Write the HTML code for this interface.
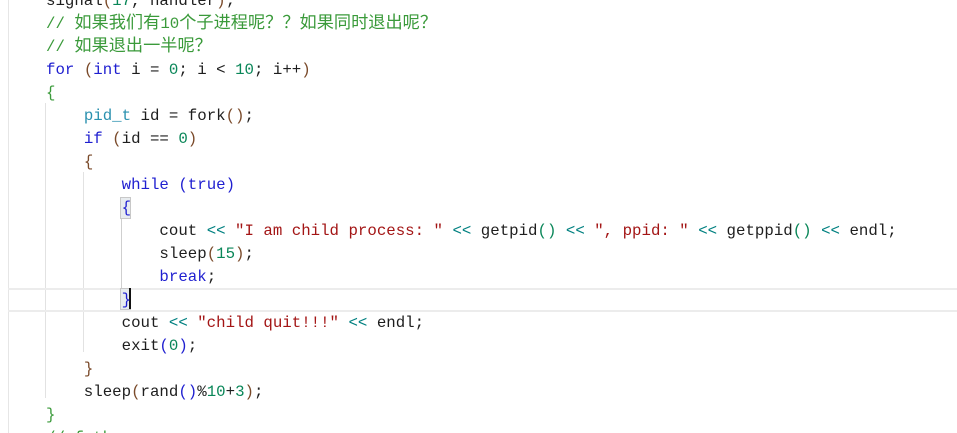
<!DOCTYPE html>
<html><head><meta charset="utf-8"><style>
html,body{margin:0;padding:0;background:#fff;width:957px;height:433px;overflow:hidden;position:relative}
.code{position:absolute;left:46px;top:-10px;font-family:"Liberation Mono","Noto Sans CJK SC",monospace;font-size:15.75px;line-height:23px;color:#1e1e1e;white-space:pre}
.k{color:#1f1fd0}.t{color:#2b91af}.n{color:#098658}.s{color:#a31515}.o{color:#008080}.c{color:#3a9a3a}.p{color:#7a4a2a}
.z{font-size:17.2px;line-height:0}
.g{position:absolute;width:1px;background:#e2e2e2}
.hl{position:absolute;left:8px;right:0;top:288px;height:20px;border-top:2px solid #ececec;border-bottom:2px solid #ececec}
.bm{position:absolute;width:9px;height:20px;background:#e8ecef;border:1px solid #c8c8c8}
</style></head><body>
<div class="g" style="left:8px;top:0;height:433px;background:#e6e6e6"></div>
<div class="g" style="left:45px;top:103px;height:295px"></div>
<div class="g" style="left:83px;top:172px;height:180px"></div>
<div class="g" style="left:121px;top:218px;height:72px;background:#cfcfcf"></div>
<div class="hl"></div>
<div class="bm" style="left:120px;top:197px"></div>
<div class="bm" style="left:120px;top:288px"></div>
<div style="position:absolute;left:129px;top:288px;width:2px;height:21px;background:#111"></div>
<div class="code">signal<span class="p">(</span><span class="n">17</span>, handler<span class="p">)</span>;
<span class="c">// <span class="z">如果我们有</span>10<span class="z">个子进程呢？？如果同时退出呢？</span></span>
<span class="c">// <span class="z">如果退出一半呢？</span></span>
<span class="k">for</span> <span class="p">(</span><span class="k">int</span> i = <span class="n">0</span>; i &lt; <span class="n">10</span>; i++<span class="p">)</span>
<span class="c">{</span>
    <span class="t">pid_t</span> id = fork<span class="p">()</span>;
    <span class="k">if</span> <span class="p">(</span>id == <span class="n">0</span><span class="p">)</span>
    <span class="p">{</span>
        <span class="k">while</span> <span class="k">(true)</span>
        <span class="k">{</span>
            cout <span class="o">&lt;&lt;</span> <span class="s">"I am child process: "</span> <span class="o">&lt;&lt;</span> getpid<span class="n">()</span> <span class="o">&lt;&lt;</span> <span class="s">", ppid: "</span> <span class="o">&lt;&lt;</span> getppid<span class="n">()</span> <span class="o">&lt;&lt;</span> endl;
            sleep<span class="p">(</span><span class="n">15</span><span class="p">)</span>;
            <span class="k">break</span>;
        <span class="k">}</span>
        cout <span class="o">&lt;&lt;</span> <span class="s">"child quit!!!"</span> <span class="o">&lt;&lt;</span> endl;
        exit<span class="k">(</span><span class="n">0</span><span class="k">)</span>;
    <span class="p">}</span>
    sleep<span class="p">(</span>rand<span class="k">()</span>%<span class="n">10</span>+<span class="n">3</span><span class="p">)</span>;
<span class="c">}</span>
<span class="c">// father</span></div>
</body></html>
